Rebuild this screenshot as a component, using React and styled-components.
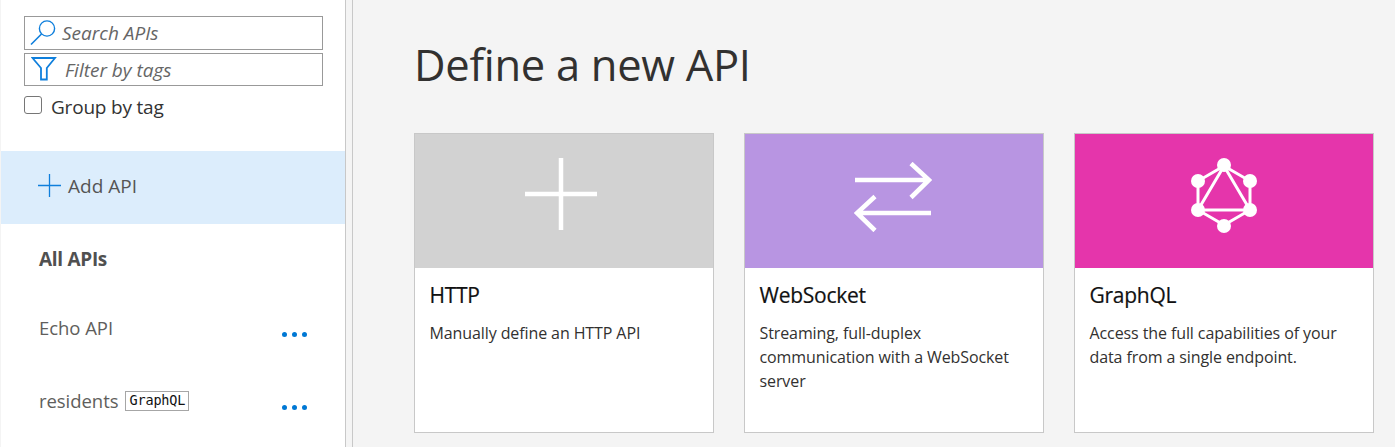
import React from "react";
import styled, { createGlobalStyle } from "styled-components";

const GlobalStyle = createGlobalStyle`
	html, body {
		margin: 0;
		padding: 0;
		height: 447px;
		overflow: hidden;
		background: #f4f4f4;
		font-family: "Open Sans", "Noto Sans", sans-serif;
	}
`

const SearchIcon = () => (
	<svg width="27" height="27" viewBox="0 0 27 27" fill="none" stroke="#0f7fdc" strokeWidth="1.4">
		<circle cx="17" cy="9.5" r="7.6" />
		<path d="M11.5 15 L1 25.5" strokeWidth="1.6" />
	</svg>
)

const FunnelIcon = () => (
	<svg width="26" height="24" viewBox="0 0 26 24" fill="none" stroke="#0f7fdc" strokeWidth="1.8">
		<path d="M1.5 1 H24 L15.8 11 V22.5 H10 V11 Z" />
	</svg>
)

const PlusIcon = ({ size, color, width }) => (
	<svg width={size} height={size} viewBox={`0 0 ${size} ${size}`} stroke={color} strokeWidth={width}>
		<path d={`M${size / 2} 0 V${size} M0 ${size / 2} H${size}`} />
	</svg>
)

const ArrowsIcon = () => (
	<svg width="78" height="70" viewBox="0 0 78 70" fill="none" stroke="#fff" strokeWidth="4.6">
		<path d="M1 18 H75 M57 1.5 L75 18 L57 35.5" />
		<path d="M77 51 H3 M21 34.5 L3 51 L21 68.5" />
	</svg>
)

const GraphqlIcon = () => (
	<svg width="68" height="76" viewBox="0 0 68 76" fill="none" stroke="#fff" strokeWidth="3">
		<path d="M34 9 L60 24 V53 L34 68 L8 53 V24 Z" />
		<path d="M34 9 L60 53 H8 Z" />
		<g fill="#fff" stroke="none">
			<circle cx="34" cy="8" r="7" />
			<circle cx="60" cy="24" r="7" />
			<circle cx="60" cy="53" r="7" />
			<circle cx="34" cy="69" r="7" />
			<circle cx="8" cy="53" r="7" />
			<circle cx="8" cy="24" r="7" />
		</g>
	</svg>
)

const cards = [
	{ name: "HTTP", text: "Manually define an HTTP API", color: "#d2d2d2", lift: 14, shift: 6, icon: <PlusIcon size={72} color="#fff" width={4.5} /> },
	{ name: "WebSocket", text: "Streaming, full-duplex communication with a WebSocket server", color: "#b895e2", lift: 8, shift: 2, icon: <ArrowsIcon /> },
	{ name: "GraphQL", text: "Access the full capabilities of your data from a single endpoint.", color: "#e535ab", lift: 12, shift: 0, icon: <GraphqlIcon /> },
]

const App = () => {
	return (
		<Page>
			<GlobalStyle />
			<Sidebar>
				<Filters>
					<SearchBox>
						<SearchIcon />
						<Placeholder>Search APIs</Placeholder>
					</SearchBox>
					<FilterBox>
						<FunnelIcon />
						<Placeholder>Filter by tags</Placeholder>
					</FilterBox>
					<GroupRow>
						<Check />
						<GroupLabel>Group by tag</GroupLabel>
					</GroupRow>
				</Filters>
				<AddRow>
					<PlusIcon size={23} color="#0f7fdc" width={1.3} />
					<AddLabel>Add API</AddLabel>
				</AddRow>
				<AllApis>All APIs</AllApis>
				<ApiRow>
					<ApiName>Echo API</ApiName>
					<Dots><i /><i /><i /></Dots>
				</ApiRow>
				<ApiRow>
					<ApiName>residents<Tag>GraphQL</Tag></ApiName>
					<Dots><i /><i /><i /></Dots>
				</ApiRow>
			</Sidebar>
			<Gutter />
			<Main>
				<Title>Define a new API</Title>
				<Cards>
					{cards.map((c) => (
						<Card key={c.name}>
							<Banner $color={c.color} $lift={c.lift} $shift={c.shift}>{c.icon}</Banner>
							<CardBody>
								<CardName>{c.name}</CardName>
								<CardText>{c.text}</CardText>
							</CardBody>
						</Card>
					))}
				</Cards>
			</Main>
		</Page>
	);
}

const Page = styled.div`
	display: flex;
	width: 1395px;
	height: 447px;
	overflow: hidden;
`
const Sidebar = styled.div`
	width: 344px;
	flex-shrink: 0;
	margin-left: 1px;
	background: #fff;
`
const Filters = styled.div`
	display: flex;
	flex-direction: column;
	padding: 16px 0 0 23px;
	height: 151px;
	box-sizing: border-box;
`
const SearchBox = styled.div`
	display: flex;
	align-items: center;
	box-sizing: border-box;
	width: 299px;
	height: 34px;
	border: 1px solid #999;
	padding-left: 5px;
	gap: 5px;
	svg { flex-shrink: 0; margin-top: -1px; }
`
const FilterBox = styled(SearchBox)`
	height: 33px;
	margin-top: 3px;
	gap: 8px;
	svg { margin-top: -2px; margin-left: 1px; }
`
const Placeholder = styled.span`
	font-size: 19px;
	font-style: italic;
	color: #666;
	letter-spacing: 0;
`
const GroupRow = styled.div`
	display: flex;
	align-items: flex-start;
	margin-top: 10px;
`
const Check = styled.span`
	box-sizing: border-box;
	width: 18px;
	height: 18px;
	border: 1.5px solid #767676;
	border-radius: 3px;
	background: #fff;
`
const GroupLabel = styled.span`
	margin-left: 9px;
	font-size: 19px;
	line-height: 23px;
	color: #333;
	letter-spacing: -0.2px;
`
const AddRow = styled.div`
	display: flex;
	align-items: center;
	height: 73px;
	padding: 0 0 4px 37px;
	background: #dcedfc;
	box-sizing: border-box;
`
const AddLabel = styled.span`
	margin-left: 7px;
	font-size: 19px;
	color: #555;
	letter-spacing: 0;
`
const AllApis = styled.div`
	padding-left: 38px;
	height: 71px;
	line-height: 70px;
	font-size: 19px;
	font-weight: 700;
	color: #505050;
	letter-spacing: -0.3px;
`
const ApiRow = styled.div`
	display: flex;
	justify-content: space-between;
	height: 73px;
	padding: 0 38px 0 38px;
`
const ApiName = styled.div`
	display: flex;
	align-items: center;
	height: 64px;
	font-size: 18.5px;
	color: #605e5c;
	letter-spacing: -0.05px;
`
const Tag = styled.span`
	margin-left: 7px;
	padding: 0 3px;
	height: 18px;
	line-height: 17px;
	border: 1px solid #a6a6a6;
	font-family: "DejaVu Sans Mono", "Liberation Mono", monospace;
	font-size: 13.5px;
	letter-spacing: -0.15px;
	color: #111;
	margin-top: 2px;
`
const Dots = styled.div`
	display: flex;
	gap: 5px;
	margin-top: 37px;
	i {
		width: 5px;
		height: 5px;
		border-radius: 50%;
		background: #0078d4;
	}
`
const Gutter = styled.div`
	width: 6px;
	flex-shrink: 0;
	background: #f4f4f4;
	border-left: 1px solid #c8c8c8;
	border-right: 1px solid #c8c8c8;
`
const Main = styled.div`
	flex: 1;
	padding-left: 61px;
	background: #f4f4f4;
`
const Title = styled.h1`
	margin: 0;
	height: 133px;
	box-sizing: border-box;
	padding-top: 36px;
	font-size: 43.5px;
	line-height: 58px;
	font-weight: 400;
	color: #323130;
	letter-spacing: -0.3px;
`
const Cards = styled.div`
	display: flex;
	gap: 30px;
`
const Card = styled.div`
	box-sizing: border-box;
	width: 300px;
	height: 300px;
	background: #fff;
	border: 1px solid #c8c8c8;
`
const Banner = styled.div`
	display: flex;
	align-items: center;
	justify-content: center;
	box-sizing: border-box;
	height: 134px;
	padding-bottom: ${(props) => props.$lift}px;
	padding-right: ${(props) => props.$shift}px;
	background: ${(props) => props.$color};
`
const CardBody = styled.div`
	padding: 13px 14px 0 14.5px;
`
const CardName = styled.div`
	font-size: 21px;
	line-height: 28px;
	font-weight: 500;
	color: #111;
	letter-spacing: -0.25px;
	-webkit-text-stroke: 0.2px #111;
`
const CardText = styled.div`
	margin-top: 12px;
	font-size: 16px;
	line-height: 24px;
	color: #323130;
	letter-spacing: -0.1px;
`

export default App;
